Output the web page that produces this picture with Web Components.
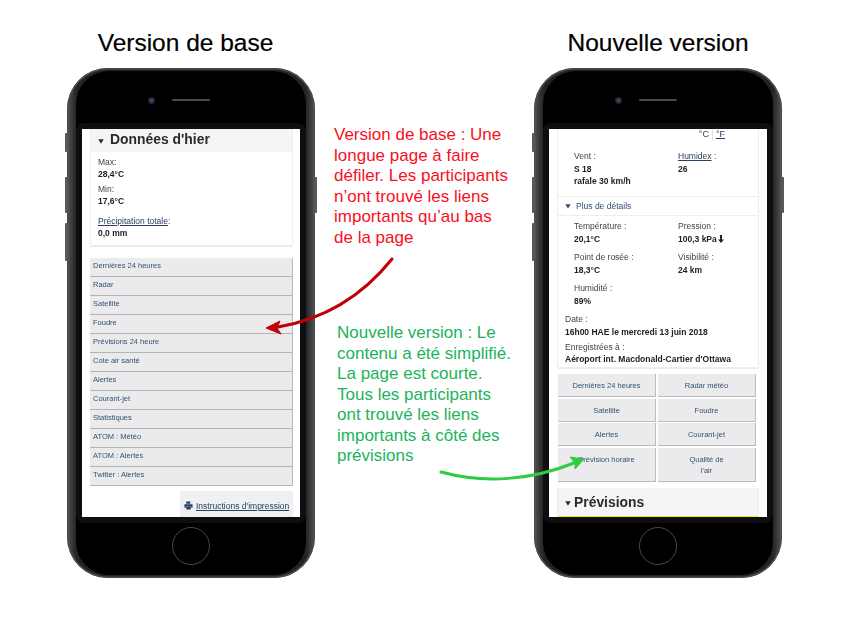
<!DOCTYPE html>
<html lang="fr"><head><meta charset="utf-8"><title>Version de base / Nouvelle version</title>
<style>
html,body{margin:0;background:#fff}
body{font-family:"Liberation Sans",Arial,sans-serif;color:#333}
</style></head><body>
<compare-page>
  <phone-col slot="left" title="Version de base" shift="11">
    <section-card>
      <section-head>Données d'hier</section-head>
      <div style="padding:3.5px 7px 0;height:93px;box-sizing:border-box">
        <wx-field label="Max:" gap="3">28,4°C</wx-field>
        <wx-field label="Min:" gap="8">17,6°C</wx-field>
        <wx-field label="Précipitation totale" suffix=":" link>0,0 mm</wx-field>
      </div>
    </section-card>
    <link-list style="margin-top:12px">
      <link-row>Dernières 24 heures</link-row><link-row>Radar</link-row><link-row>Satellite</link-row>
      <link-row>Foudre</link-row><link-row>Prévisions 24 heure</link-row><link-row>Cote air santé</link-row>
      <link-row>Alertes</link-row><link-row>Courant-jet</link-row><link-row>Statistiques</link-row>
      <link-row>ATOM : Météo</link-row><link-row>ATOM : Alertes</link-row><link-row>Twitter : Alertes</link-row>
    </link-list>
    <print-link></print-link>
  </phone-col>
  <annotation-text slot="red" style="color:#f8101e">Version de base : Une<br>longue page à faire<br>défiler. Les participants<br>n’ont trouvé les liens<br>importants qu’au bas<br>de la page</annotation-text>
  <annotation-text slot="green" style="color:#1cb35c">Nouvelle version : Le<br>contenu a été simplifié.<br>La page est courte.<br>Tous les participants<br>ont trouvé les liens<br>importants à côté des<br>prévisions</annotation-text>
  <phone-col slot="right" title="Nouvelle version">
    <current-card></current-card>
    <button-grid>
      <grid-btn>Dernières 24 heures</grid-btn><grid-btn>Radar météo</grid-btn>
      <grid-btn>Satellite</grid-btn><grid-btn>Foudre</grid-btn>
      <grid-btn>Alertes</grid-btn><grid-btn>Courant-jet</grid-btn>
      <grid-btn tall>Prévision horaire</grid-btn><grid-btn tall>Qualité de<br>l'air</grid-btn>
    </button-grid>
    <section-card style="margin:6px 8px 0;border-bottom:0">
      <section-head big>Prévisions</section-head>
      <div style="height:2px;background:#f5ec00"></div>
    </section-card>
  </phone-col>
</compare-page>
<script>
const def=(n,html)=>customElements.define(n,class extends HTMLElement{
  connectedCallback(){ if(this.shadowRoot)return; const r=this.attachShadow({mode:'open'}); r.innerHTML=typeof html==='function'?html(this):html; }
});
const tri=(s,x='margin-right:5px')=>`<svg width="${s}" height="${s}" viewBox="0 0 10 10" style="${x};flex:none"><path d="M0.5 2H9.5L5 9.5Z" fill="currentColor"/></svg>`;

def('compare-page',`<style>
:host{display:grid;position:relative;width:850px;height:625px;overflow:hidden;box-sizing:border-box;padding:0 68px 0 67px;grid-template-columns:248px 1fr 248px;}
.mid{display:flex;flex-direction:column;padding:125px 0 0 19px}
.g{display:block;margin:75px 0 0 3px}
svg.a{position:absolute;left:0;top:0;pointer-events:none}
</style>
<slot name="left"></slot>
<div class="mid"><slot name="red"></slot><div class="g"><slot name="green"></slot></div></div>
<slot name="right"></slot>
<svg class="a" width="850" height="625" viewBox="0 0 850 625">
 <path d="M392 259C368 289 331 318 278 327" fill="none" stroke="#c00008" stroke-width="3" stroke-linecap="round"/>
 <path d="M266 328L280 321L277 328L281 334Z" fill="#c00008" stroke="#c00008" stroke-linejoin="round"/>
 <path d="M441 472C485 484 532 480 574 463" fill="none" stroke="#2ecc40" stroke-width="3" stroke-linecap="round"/>
 <path d="M584 459L575 469L575 463L570 457Z" fill="#2ecc40" stroke="#2ecc40" stroke-linejoin="round"/>
</svg>`);

def('phone-col',el=>`<style>
:host{display:block}
h2{margin:0;height:68px;box-sizing:border-box;padding:28px ${el.getAttribute('shift')||0}px 0 0;font:400 24.5px/30px "Liberation Sans",Arial,sans-serif;color:#000;text-align:center;white-space:nowrap;-webkit-text-stroke:.2px #000}
.body{position:relative;width:248px;height:510px;box-sizing:border-box;border-radius:41px;background:linear-gradient(90deg,#67676a 0,#47474a 1%,#2c2c2e 3%,#232325 4%,#232325 96%,#2c2c2e 97%,#47474a 99%,#67676a 100%);box-shadow:inset 0 0 0 1.5px #4c4c4e;padding:3px 9px}
.in{height:100%;box-sizing:border-box;border-radius:33px;background:#000;display:grid;grid-template-rows:52px 400px 52px;width:230px}
.top{display:flex;align-items:center;gap:17px;padding:6px 0 0 72px;box-sizing:border-box}
.cam{width:7px;height:7px;border-radius:50%;background:radial-gradient(#38456a 0 25%,#23242a 55%,#141416 100%)}
.spk{width:38px;height:1.5px;background:#48484a;border-radius:1px}
.wrap{background:#0e0e10;border-radius:8px;padding:6px}
.scr{width:218px;height:388px;background:#fff;overflow:hidden;color:#333;filter:blur(.3px);display:flex;flex-direction:column}
.bot{display:flex;align-items:center;justify-content:center;padding-bottom:6px;box-sizing:border-box}
.home{width:38px;height:38px;box-sizing:border-box;border-radius:50%;border:1.5px solid #48484a;background:#000}
.btn{position:absolute;background:#58585b;width:3px;border-radius:1px}
</style>
<h2>${el.getAttribute('title')}</h2>
<div class="body">
 <div class="in">
  <div class="top"><span class="cam"></span><span class="spk"></span></div>
  <div class="wrap"><div class="scr"><slot></slot></div></div>
  <div class="bot"><span class="home"></span></div>
 </div>
 <i class="btn" style="left:-2px;top:65px;height:19px"></i>
 <i class="btn" style="left:-2px;top:109px;height:36px"></i>
 <i class="btn" style="left:-2px;top:155px;height:38px"></i>
 <i class="btn" style="right:-2px;top:109px;height:36px"></i>
</div>`);

def('section-card',`<style>:host{display:block;flex:none;margin:0 7px 0 8px;border:1px solid #eeeeee;border-top:0;border-radius:0 0 2px 2px;box-shadow:0 1px 1px #e8e8e8;background:#fff}</style><slot></slot>`);

def('section-head',el=>{const big=el.hasAttribute('big');return `<style>:host{display:flex;align-items:center;background:#f5f5f5;padding-left:7px;font:700 13.9px/21px "Liberation Sans",Arial,sans-serif;color:#2b2b2b;${big?'height:27px;padding-top:1px;':'height:21px;padding-bottom:2px;'}}</style>${tri(6,`margin-right:${big?3:6}px;margin-top:2px`)}<slot></slot>`});

def('wx-field',el=>{const l=el.hasAttribute('link');const lab=el.getAttribute('label');return `<style>
:host{display:block;font:400 8.5px/12px "Liberation Sans",Arial,sans-serif;color:#444;margin-bottom:${el.getAttribute('gap')||0}px}
b{display:block;color:#222;font-weight:700}a{color:#284162;text-decoration:underline}
</style>${l?`<a>${lab}</a>${el.getAttribute('suffix')||''}`:lab}<b><slot></slot></b>`});

def('link-list',`<style>:host{display:block;flex:none;margin:0 7px 0 8px}</style><slot></slot>`);
def('link-row',`<style>:host{display:block;height:19px;box-sizing:border-box;background:#ebebed;border-right:1px solid #bbb;border-bottom:1px solid #b4b4b4;padding-left:3px;font:400 7.5px/15px "Liberation Sans",Arial,sans-serif;color:#335075}</style><slot></slot>`);

def('print-link',`<style>:host{display:flex;flex:none;align-items:center;align-self:flex-end;margin:5px 7px 0 0;width:113px;height:26px;box-sizing:border-box;padding:3px 0 0 4px;background:#eef0f3;font:400 8.5px/12px "Liberation Sans",Arial,sans-serif;color:#284162;white-space:nowrap}
a{text-decoration:underline;margin-left:3px}</style>
<svg width="9" height="9" viewBox="0 0 10 10"><path d="M2.5 0.5H7V3H2.5ZM0.5 3.5H9.5V7.5H8V6H2V7.5H0.5ZM2.5 6.5H7.5V9.5H2.5Z" fill="#284162"/></svg><a>Instructions d'impression</a>`);

def('current-card',`<style>
:host{display:block;flex:none;margin:0 8px 0;border:1px solid #eee;border-top:0;height:239px;box-sizing:border-box;border-radius:0 0 2px 2px;box-shadow:0 1px 1px #e8e8e8;font:400 8.5px/12.5px "Liberation Sans",Arial,sans-serif;color:#444;overflow:hidden}
.u{display:flex;justify-content:flex-end;height:12px;padding-right:33px;margin-top:-1px;color:#444;font-size:9px;line-height:12px}
.u span{padding-right:3px;border-right:1px solid #ddd}.u a{padding-left:3px;color:#284162;text-decoration:underline}
.two{display:grid;grid-template-columns:104px 1fr;padding-left:16px}
.two.w{padding-top:10px;height:57px;box-sizing:border-box;border-bottom:1px solid #eee}
.more{display:flex;align-items:center;height:18px;padding-left:7px;border-bottom:1px solid #eee;color:#335075;}
.d{padding-top:4px}.d>div{height:31px}
b{display:block;color:#222}a.l{color:#284162;text-decoration:underline}
.f{padding:0 7px;margin-top:0}.f b{margin-bottom:2.5px}
</style>
<div class="u"><span>°C</span><a>°F</a></div>
<div class="two w"><div>Vent :<b>S 18</b><b>rafale 30 km/h</b></div><div><a class="l">Humidex</a> :<b>26</b></div></div>
<div class="more">${tri(6,'margin-right:5px')}Plus de détails</div>
<div class="two d">
 <div>Température :<b>20,1°C</b></div><div>Pression :<b>100,3 kPa<svg width="6" height="8" viewBox="0 0 6 8" style="margin-left:1px;vertical-align:-1px"><path d="M2 0H4V4.5H6L3 8L0 4.5H2Z" fill="#222"/></svg></b></div>
 <div>Point de rosée :<b>18,3°C</b></div><div>Visibilité :<b>24 km</b></div>
 <div>Humidité :<b>89%</b></div><div></div>
</div>
<div class="f">Date :<b>16h00 HAE le mercredi 13 juin 2018</b>Enregistrées à :<b>Aéroport int. Macdonald-Cartier d'Ottawa</b></div>`);

def('button-grid',`<style>:host{display:grid;flex:none;grid-template-columns:98px 98px;gap:1.5px 2px;margin:6px 0 0 9px}</style><slot></slot>`);
def('grid-btn',el=>`<style>:host{display:block;height:${el.hasAttribute('tall')?34:23}px;box-sizing:border-box;background:#ebebed;border-right:1px solid #bbb;border-bottom:1px solid #bbb;text-align:center;padding-top:6px;font:400 7.5px/11px "Liberation Sans",Arial,sans-serif;color:#335075}</style><slot></slot>`);

def('annotation-text',`<style>:host{display:block;font:400 17px/20.5px "Liberation Sans",Arial,sans-serif;white-space:nowrap;width:181px}</style><slot></slot>`);
</script>
</body></html>
